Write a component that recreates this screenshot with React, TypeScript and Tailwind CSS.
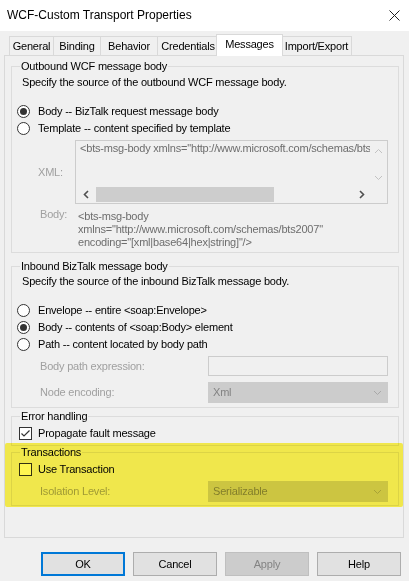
import React from 'react';

const font = "font-['Liberation_Sans',Arial,sans-serif] text-[11px] leading-[13px] tracking-[-0.2px]";

const Radio: React.FC<{ checked?: boolean }> = ({ checked }) => (
  <span className="w-[13px] h-[13px] rounded-full border border-[#333333] bg-white flex items-center justify-center shrink-0">
    {checked && <span className="w-[7px] h-[7px] rounded-full bg-[#333333]" />}
  </span>
);

const Check: React.FC<{ checked?: boolean }> = ({ checked }) => (
  <span className="w-[13px] h-[13px] border border-[#333333] bg-white flex items-center justify-center shrink-0">
    {checked && (
      <svg width="11" height="11" viewBox="0 0 11 11">
        <polyline points="1.5,5.5 4,8 9.5,2.5" fill="none" stroke="#333333" strokeWidth="1.2" />
      </svg>
    )}
  </span>
);

const Chevron: React.FC<{ dir: 'up' | 'down' | 'left' | 'right'; color: string; w?: number }> = ({ dir, color, w = 1 }) => {
  const pts = {
    up: '1,5 4.5,1.5 8,5',
    down: '1,2 4.5,5.5 8,2',
    left: '5,1 1.5,4.5 5,8',
    right: '2,1 5.5,4.5 2,8',
  }[dir];
  const vertical = dir === 'up' || dir === 'down';
  return (
    <svg width={vertical ? 9 : 7} height={vertical ? 7 : 9} viewBox={vertical ? '0 0 9 7' : '0 0 7 9'}>
      <polyline points={pts} fill="none" stroke={color} strokeWidth={w} />
    </svg>
  );
};

const Combo: React.FC<{ value: string }> = ({ value }) => (
  <div className="w-[180px] h-[21px] bg-[#cccccc] border border-[#cccccc] flex items-center justify-between pl-[4px] pr-[5px] text-[#838383]">
    <span>{value}</span>
    <Chevron dir="down" color="#a8a8a8" />
  </div>
);

const Group: React.FC<{ title: string; className?: string; children: React.ReactNode }> = ({ title, className = '', children }) => (
  <fieldset className={`border border-[#dcdcdc] ml-[6px] w-[388px] ${className}`}>
    <legend className="ml-[8px] px-[1px] text-black">{title}</legend>
    {children}
  </fieldset>
);

const Tab: React.FC<{ label: string; w: string; selected?: boolean; last?: boolean }> = ({ label, w, selected, last }) =>
  selected ? (
    <div className={`${w} h-[22px] -mx-[2px] relative z-10 bg-white border border-b-0 border-[#d9d9d9] flex items-center justify-center pb-[2px]`}>
      {label}
    </div>
  ) : (
    <div className={`${w} h-[19px] mb-px bg-[#f0f0f0] border-t border-l ${last ? 'border-r' : ''} border-[#d9d9d9] flex items-center justify-center`}>
      {label}
    </div>
  );

const Button: React.FC<{ label: string; primary?: boolean; disabled?: boolean }> = ({ label, primary, disabled }) => (
  <div
    className={`w-[84px] h-[24px] flex items-center justify-center ${
      primary
        ? 'bg-[#e1e1e1] border-2 border-[#0078d7] text-black'
        : disabled
        ? 'bg-[#cccccc] border border-[#bfbfbf] text-[#838383]'
        : 'bg-[#e1e1e1] border border-[#adadad] text-black'
    }`}
  >
    {label}
  </div>
);

export default function App() {
  return (
    <div className={`w-[409px] h-[581px] bg-[#f0f0f0] relative overflow-hidden text-black ${font}`}>
      {/* title bar */}
      <div className="h-[31px] bg-white flex items-center justify-between pl-[7px] pr-[9px]">
        <span className="text-[12px] tracking-normal">WCF-Custom Transport Properties</span>
        <svg width="11" height="11" viewBox="0 0 11 11">
          <path d="M0.5 0.5 L10.5 10.5 M10.5 0.5 L0.5 10.5" stroke="#222" strokeWidth="1" />
        </svg>
      </div>

      {/* tabs */}
      <div className="mt-[3px] h-[22px] pl-[9px] flex items-end relative z-10">
        <Tab label="General" w="w-[44px]" />
        <Tab label="Binding" w="w-[47px]" />
        <Tab label="Behavior" w="w-[57px]" />
        <Tab label="Credentials" w="w-[61px]" />
        <Tab label="Messages" w="w-[67px]" selected />
        <Tab label="Import/Export" w="w-[71px]" last />
      </div>

      {/* tab page */}
      <div className="-mt-px ml-[4px] w-[400px] h-[483px] border border-[#d9d9d9] bg-[#f0f0f0]">
        <Group title="Outbound WCF message body" className="mt-[4px] h-[193px]">
          <div className="mt-[3px] ml-[10px]">Specify the source of the outbound WCF message body.</div>
          <div className="mt-[14px] ml-[5px] h-[17px] flex items-center gap-[8px]">
            <Radio checked />
            <span>Body -- BizTalk request message body</span>
          </div>
          <div className="ml-[5px] h-[17px] flex items-center gap-[8px]">
            <Radio />
            <span>Template -- content specified by template</span>
          </div>
          <div className="mt-[3px] flex items-center">
            <span className="ml-[26px] w-[37px] text-[#a0a0a0]">XML:</span>
            <div className="w-[313px] h-[64px] border border-[#cccccc] flex flex-col">
              <div className="flex flex-1">
                <div className="flex-1 overflow-hidden whitespace-nowrap pl-[4px] pt-[1px] text-[#6d6d6d]">
                  &lt;bts-msg-body xmlns="http://www.microsoft.com/schemas/bts2007" encoding="xml"/&gt;
                </div>
                <div className="w-[17px] flex flex-col items-center justify-between pt-[7px] pb-[5px]">
                  <Chevron dir="up" color="#c2c2c2" />
                  <Chevron dir="down" color="#c2c2c2" />
                </div>
              </div>
              <div className="h-[17px] flex">
                <div className="w-[20px] flex items-center justify-center">
                  <Chevron dir="left" color="#505050" w={1.6} />
                </div>
                <div className="w-[178px] h-[15px] mt-px bg-[#cdcdcd]" />
                <div className="flex-1" />
                <div className="w-[17px] flex items-center justify-center">
                  <Chevron dir="right" color="#505050" w={1.6} />
                </div>
                <div className="w-[17px]" />
              </div>
            </div>
          </div>
          <div className="mt-[6px] flex">
            <span className="ml-[28px] w-[38px] text-[#a0a0a0] -mt-[2px]">Body:</span>
            <div className="text-[#6d6d6d]">
              <div>&lt;bts-msg-body</div>
              <div>xmlns="http://www.microsoft.com/schemas/bts2007"</div>
              <div>encoding="[xml|base64|hex|string]"/&gt;</div>
            </div>
          </div>
        </Group>

        <Group title="Inbound BizTalk message body" className="mt-[7px] h-[148px]">
          <div className="mt-[2px] ml-[10px]">Specify the source of the inbound BizTalk message body.</div>
          <div className="mt-[14px] ml-[5px] h-[17px] flex items-center gap-[8px]">
            <Radio />
            <span>Envelope -- entire &lt;soap:Envelope&gt;</span>
          </div>
          <div className="ml-[5px] h-[17px] flex items-center gap-[8px]">
            <Radio checked />
            <span>Body -- contents of &lt;soap:Body&gt; element</span>
          </div>
          <div className="ml-[5px] h-[17px] flex items-center gap-[8px]">
            <Radio />
            <span>Path -- content located by body path</span>
          </div>
          <div className="mt-[3px] flex items-center">
            <span className="ml-[28px] w-[168px] text-[#a0a0a0]">Body path expression:</span>
            <div className="w-[180px] h-[20px] border border-[#cccccc] bg-[#f0f0f0]" />
          </div>
          <div className="mt-[6px] flex items-center">
            <span className="ml-[28px] w-[168px] text-[#a0a0a0]">Node encoding:</span>
            <Combo value="Xml" />
          </div>
        </Group>

        <Group title="Error handling" className="mt-[2px] h-[36px]">
          <div className="mt-[4px] ml-[7px] flex items-center gap-[6px]">
            <Check checked />
            <span>Propagate fault message</span>
          </div>
        </Group>

        <Group title="Transactions" className="h-[60px]">
          <div className="mt-[4px] ml-[7px] flex items-center gap-[6px]">
            <Check />
            <span>Use Transaction</span>
          </div>
          <div className="mt-[5px] flex items-center">
            <span className="ml-[28px] w-[168px] text-[#a0a0a0]">Isolation Level:</span>
            <Combo value="Serializable" />
          </div>
        </Group>
      </div>

      {/* buttons */}
      <div className="mt-[14px] ml-[41px] flex gap-[8px]">
        <Button label="OK" primary />
        <Button label="Cancel" />
        <Button label="Apply" disabled />
        <Button label="Help" />
      </div>

      {/* yellow highlighter mark */}
      <div className="absolute left-[5px] top-[443px] w-[398px] h-[64px] bg-[#fff651] mix-blend-multiply rounded-[2px]" />
    </div>
  );
}
